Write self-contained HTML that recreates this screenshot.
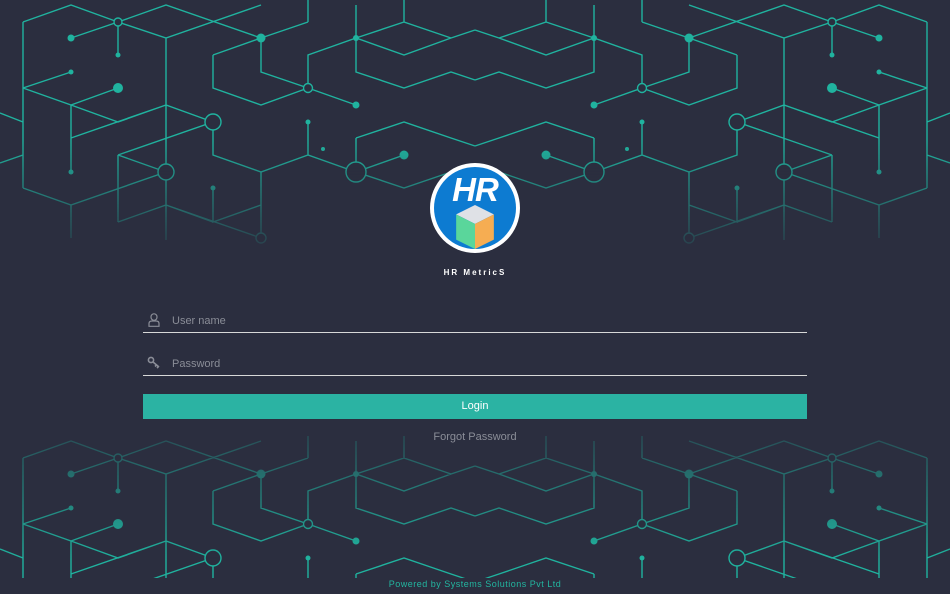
<!DOCTYPE html>
<html><head><meta charset="utf-8">
<style>
html,body{margin:0;padding:0;width:950px;height:594px;overflow:hidden;}
body{background:#2b2e3f;position:relative;font-family:"Liberation Sans",Arial,sans-serif;}
svg.bg{position:absolute;left:0;top:0;}
.logo{position:absolute;left:430px;top:163px;width:90px;height:90px;border-radius:50%;background:#fff;}
.logo .in{position:absolute;left:4px;top:4px;width:82px;height:82px;border-radius:50%;background:#0d7bd1;}
.logo .hr{position:absolute;left:0;width:90px;top:8px;text-align:center;color:#fff;font-weight:bold;font-style:italic;font-size:33px;letter-spacing:-1px;}
.title{position:absolute;left:0;width:950px;top:268px;text-align:center;color:#fff;font-size:8px;font-weight:bold;letter-spacing:2px;}
.field{position:absolute;left:143px;width:664px;border-bottom:1px solid #d8d8d8;height:20px;}
.field span{position:absolute;left:29px;top:3px;color:#8a8d97;font-size:11px;}
.btn{position:absolute;left:143px;top:394px;width:664px;height:25px;background:#2bb3a3;color:#fff;font-size:11px;text-align:center;line-height:25px;}
.fp{position:absolute;left:0;width:950px;top:431px;text-align:center;color:#8a8d97;font-size:11px;}
.pw{position:absolute;left:0;width:950px;top:579px;text-align:center;color:#22b6a0;font-size:9px;letter-spacing:.5px;}
</style></head><body>
<svg class="bg" width="950" height="594" viewBox="0 0 950 594">
<defs>
<linearGradient id="ft" gradientUnits="userSpaceOnUse" x1="0" y1="140" x2="0" y2="265">
<stop offset="0" stop-color="#fff"/><stop offset="1" stop-color="#fff" stop-opacity="0"/></linearGradient>
<mask id="mt" maskUnits="userSpaceOnUse" x="0" y="0" width="950" height="594"><rect x="0" y="0" width="950" height="140" fill="#fff"/><rect x="0" y="140" width="950" height="130" fill="url(#ft)"/></mask>
<linearGradient id="fb" gradientUnits="userSpaceOnUse" x1="0" y1="420" x2="0" y2="560">
<stop offset="0" stop-color="#fff" stop-opacity="0.15"/><stop offset="1" stop-color="#fff"/></linearGradient>
<mask id="mb" maskUnits="userSpaceOnUse" x="0" y="0" width="950" height="594"><rect x="0" y="420" width="950" height="158" fill="url(#fb)"/></mask>
<g id="half" fill="none" stroke="#20b39f" stroke-width="1.4">
<path d="M23,22 L71,5 L118,22 L166,38 L261,5 M118,22 L166,5 L261,38 M71,38 L118,22 M118,22 V55 M23,22 V188 M23,88 L71,72 M23,88 L71,105 L118,122 L166,105 L213,122 M71,105 L118,88 M71,105 V172 M71,138 L166,105 M166,38 V240 M118,155 L213,122 M118,155 V222 M118,155 L166,172 M23,188 L71,205 L166,172 M71,205 V238 M118,222 L166,205 L213,222 L261,205 M166,205 L261,238 M213,122 V155 L261,172 L308,155 L356,172 L404,155 M261,172 V238 M213,188 V222 L261,205 M213,55 L261,38 L261,72 L308,88 L356,105 M213,55 V88 L261,105 L308,88 M308,88 V55 L356,38 L404,55 L451,38 L475,30 M308,0 V22 M308,22 L261,38 M356,5 V72 L404,88 L451,72 L475,80 M404,0 V22 L451,38 M356,38 L404,22 M308,122 V155 M356,138 L404,122 L451,138 L475,146 M356,138 V172 M404,155 L356,172 L404,188 L451,172 M0,113 L23,122 M0,163 L23,155"/>
<g fill="#20b39f" stroke="none">
<circle cx="71" cy="38" r="3.5"/><circle cx="118" cy="55" r="2.5"/><circle cx="71" cy="72" r="2.5"/><circle cx="118" cy="88" r="5"/><circle cx="71" cy="172" r="2.5"/><circle cx="261" cy="38" r="4.5"/><circle cx="356" cy="105" r="3.5"/><circle cx="356" cy="38" r="3"/><circle cx="308" cy="122" r="2.5"/><circle cx="323" cy="149" r="2"/><circle cx="404" cy="155" r="4.5"/><circle cx="213" cy="188" r="2.5"/>
</g>
<g fill="#2b2e3f"><circle cx="118" cy="22" r="4"/><circle cx="213" cy="122" r="8"/><circle cx="166" cy="172" r="8"/><circle cx="308" cy="88" r="4.5"/><circle cx="356" cy="172" r="10"/><circle cx="261" cy="238" r="5"/></g>
</g>
</defs>
<g mask="url(#mt)">
<use href="#half"/>
<use href="#half" transform="translate(950,0) scale(-1,1)"/>
</g>
<g mask="url(#mb)">
<g transform="translate(0,436)"><use href="#half"/><use href="#half" transform="translate(950,0) scale(-1,1)"/></g>
</g>
</svg>

<div class="logo"><div class="in"></div><div class="hr">HR</div>
<svg style="position:absolute;left:26px;top:42px" width="38" height="44" viewBox="0 0 36 42">
<polygon points="18,0 36,9 18,18 0,9" fill="#dfe1e6"/>
<polygon points="0,9 18,18 18,42 0,33" fill="#5ad69b"/>
<polygon points="36,9 18,18 18,42 36,33" fill="#f6ad52"/>
</svg></div>
<div class="title">HR MetricS</div>

<div class="field" style="top:312px">
<svg style="position:absolute;left:5px;top:1px" width="12" height="14" viewBox="0 0 12 14" fill="none" stroke="#8a8d97" stroke-width="1.2"><rect x="3" y="0.8" width="6" height="6.5" rx="3"/><path d="M1,13.3 V10.5 Q1,8 4,8 H8 Q11,8 11,10.5 V13.3 Z"/></svg>
<span>User name</span></div>
<div class="field" style="top:355px">
<svg style="position:absolute;left:4px;top:1px" width="14" height="13" viewBox="0 0 14 13" fill="none" stroke="#8a8d97" stroke-width="1.6"><circle cx="4" cy="4" r="2.6"/><path d="M6,6 L12,11 M9.5,9 L8,10.5 M11.5,10.5 L10,12"/></svg>
<span>Password</span></div>
<div class="btn">Login</div>
<div class="fp">Forgot Password</div>
<div class="pw">Powered by Systems Solutions Pvt Ltd</div>
</body></html>
